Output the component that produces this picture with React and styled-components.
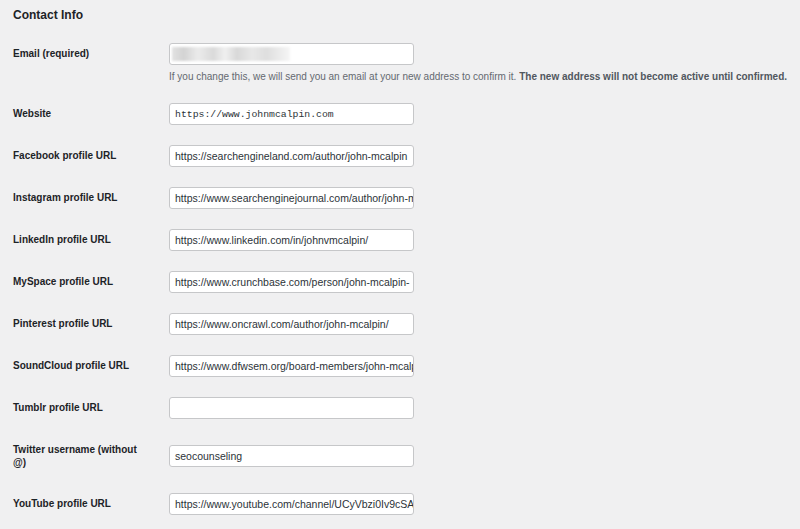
import React from "react";
import styled, { createGlobalStyle } from "styled-components";

const Global = createGlobalStyle`
  html, body { margin: 0; padding: 0; background: #f0f0f1; }
  body { font-family: "Liberation Sans", Arial, sans-serif; color: #1d2327; }
`;

const Page = styled.div`
  width: 800px;
  height: 529px;
  overflow: hidden;
  padding: 0 0 0 13px;
  box-sizing: border-box;
`;

const Heading = styled.h2`
  margin: 0;
  padding-top: 8px;
  height: 25px;
  font-size: 12px;
  line-height: 15px;
  font-weight: 700;
  color: #1d2327;
`;

const Row = styled.div`
  display: flex;
`;

const Th = styled.label`
  align-self: flex-start;
  width: 156px;
  flex: none;
  box-sizing: border-box;
  padding: 14px 22px 14px 0;
  font-size: 10px;
  line-height: 13px;
  font-weight: 700;
  color: #1d2327;
`;

const Td = styled.div`
  align-self: center;
  padding: 10px 0;
  display: flex;
  flex-direction: column;
`;

const Field = styled.div`
  width: 245px;
  height: 22px;
  box-sizing: border-box;
  background: #fff;
  border: 1px solid #c6c7c9;
  border-radius: 3px;
  padding: 0 5px;
  display: flex;
  align-items: center;
  overflow: hidden;
  white-space: nowrap;
  font-family: ${(p) => (p.$mono ? '"Liberation Mono", monospace' : '"Liberation Sans", Arial, sans-serif')};
  font-size: ${(p) => (p.$mono ? "9.8px" : "10.5px")};
  color: #2c3338;
`;

const Blur = styled.span`
  display: inline-block;
  width: 118px;
  height: 14px;
  margin-left: -3px;
  background: linear-gradient(90deg, #e2e2e2 0%, #d3d3d3 10%, #ebebeb 22%, #dadada 35%, #f0f0f0 45%, #d8d8d8 55%, #e8e8e8 68%, #dedede 80%, #f6f6f6 100%);
  filter: blur(1px);
`;

const Desc = styled.p`
  margin: 5px 0 0;
  font-size: 10px;
  line-height: 13px;
  color: #646970;
  white-space: nowrap;
  b { color: #50575e; font-weight: 700; }
`;

const rows = [
  { label: "Website", value: "https://www.johnmcalpin.com", mono: true },
  { label: "Facebook profile URL", value: "https://searchengineland.com/author/john-mcalpin" },
  { label: "Instagram profile URL", value: "https://www.searchenginejournal.com/author/john-mcalpin" },
  { label: "LinkedIn profile URL", value: "https://www.linkedin.com/in/johnvmcalpin/" },
  { label: "MySpace profile URL", value: "https://www.crunchbase.com/person/john-mcalpin-" },
  { label: "Pinterest profile URL", value: "https://www.oncrawl.com/author/john-mcalpin/" },
  { label: "SoundCloud profile URL", value: "https://www.dfwsem.org/board-members/john-mcalpin" },
  { label: "Tumblr profile URL", value: "" },
  { label: "Twitter username (without @)", value: "seocounseling" },
  { label: "YouTube profile URL", value: "https://www.youtube.com/channel/UCyVbzi0Iv9cSA" },
];

export default function App() {
  return (
    <Page>
      <Global />
      <Heading>Contact Info</Heading>
      <Row>
        <Th>Email (required)</Th>
        <Td>
          <Field>
            <Blur />
          </Field>
          <Desc>
            If you change this, we will send you an email at your new address to confirm it.{" "}
            <b>The new address will not become active until confirmed.</b>
          </Desc>
        </Td>
      </Row>
      {rows.map((r) => (
        <Row key={r.label}>
          <Th>{r.label}</Th>
          <Td>
            <Field $mono={r.mono}>{r.value}</Field>
          </Td>
        </Row>
      ))}
    </Page>
  );
}
